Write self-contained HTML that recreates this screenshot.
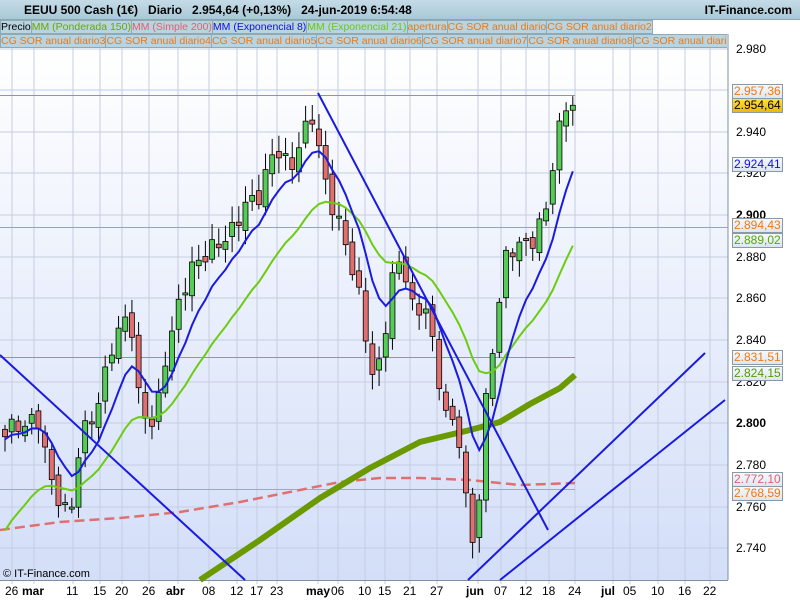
<!DOCTYPE html>
<html><head><meta charset="utf-8"><style>
*{margin:0;padding:0;box-sizing:border-box}
body{width:800px;height:600px;overflow:hidden;font-family:"Liberation Sans",sans-serif;background:#fff;position:relative}
#hdr{position:absolute;left:0;top:0;width:800px;height:20px;background:linear-gradient(#c4dce6,#a9c9d8);border-bottom:1px solid #8aa;font-weight:bold;font-size:12px;line-height:20px}
.leg{position:absolute;height:14px;font-size:10.5px;line-height:13px;white-space:nowrap;overflow:hidden}
.leg span{display:inline-block;background:#b9d3df;border:1px solid #8fa9b5;padding:0;margin-right:-1px;height:14px}
.lb{position:absolute;left:732px;font-size:12px;height:15px;line-height:13px;border:1px solid #8899aa;background:linear-gradient(#f6f9fc,#dde6f0);padding:0 1px}
.ax{position:absolute;left:736px;font-size:12px;color:#000}
.dx{position:absolute;top:584px;font-size:12px}
</style></head><body>
<svg width="800" height="600" style="position:absolute;left:0;top:0">
<defs><linearGradient id="bg" x1="0" y1="0" x2="0" y2="1"><stop offset="0" stop-color="#ffffff"/><stop offset="1" stop-color="#d3def8"/></linearGradient></defs>
<rect x="0" y="48" width="728" height="532" fill="url(#bg)"/>
<g id="grid" stroke="#c5cde0" stroke-width="1"></g>
<line x1="728" y1="34" x2="728" y2="580" stroke="#7f8fa0"/>
<line x1="0" y1="580.5" x2="728" y2="580.5" stroke="#7f8fa0"/>
<line x1="0" y1="227.5" x2="728" y2="227.5" stroke="#9aa4b4"/>
<line x1="0" y1="95.5" x2="575" y2="95.5" stroke="#f08010"/>
<line x1="0" y1="357.5" x2="575" y2="357.5" stroke="#f08010"/>
<line x1="0" y1="489.5" x2="575" y2="489.5" stroke="#a0a8c0"/>
<polyline fill="none" stroke="#e07070" stroke-width="2.5" stroke-dasharray="10,5" points="0,530 60,522 120,518 180,512 240,502 300,490 340,482 380,478 420,478 470,480 520,485 575,483"/>
<polyline fill="none" stroke="#6a9a00" stroke-width="6" points="200,580 260,540 320,498 370,468 420,442 470,430 500,422 530,404 560,388 575,375"/>
<g id="cd"></g>
<polyline id="e21" fill="none" stroke="#6ccc10" stroke-width="2"/>
<polyline id="e8" fill="none" stroke="#1a1ae0" stroke-width="2"/>
<g stroke="#1a1ae0" stroke-width="2">
<line x1="0" y1="355" x2="245" y2="580"/>
<line x1="318" y1="93" x2="548" y2="530"/>
<line x1="468" y1="580" x2="705" y2="353"/>
<line x1="500" y1="580" x2="725" y2="400"/>
</g>
<g fill="none" stroke="#000"><rect x="5" y="10" width="5" height="6" fill="#e07070"/><line x1="7.5" y1="7" x2="7.5" y2="19"/><rect x="12" y="5" width="5" height="9" fill="#50cc50"/><line x1="14.5" y1="2" x2="14.5" y2="17"/></g>
</svg>
<div id="hdr"><span style="position:absolute;left:24px">EEUU 500 Cash (1€)&nbsp;&nbsp;&nbsp;Diario&nbsp;&nbsp;&nbsp;2.954,64 (+0,13%)&nbsp;&nbsp;&nbsp;24-jun-2019 6:54:48</span><span style="position:absolute;right:8px">IT-Finance.com</span></div>
<div class="leg" style="left:0;top:20px;width:690px"><span style="color:#000">Precio</span><span style="color:#66aa00">MM (Ponderada 150)</span><span style="color:#e06070">MM (Simple 200)</span><span style="color:#1010e0">MM (Exponencial 8)</span><span style="color:#66cc10">MM (Exponencial 21)</span><span style="color:#f07810">apertura</span><span style="color:#f07810">CG SOR anual diario</span><span style="color:#f07810">CG SOR anual diario2</span></div>
<div class="leg" style="left:0;top:34px;width:727px"><span style="color:#f07810">CG SOR anual diario3</span><span style="color:#f07810">CG SOR anual diario4</span><span style="color:#f07810">CG SOR anual diario5</span><span style="color:#f07810">CG SOR anual diario6</span><span style="color:#f07810">CG SOR anual diario7</span><span style="color:#f07810">CG SOR anual diario8</span><span style="color:#f07810">CG SOR anual diario9</span></div>
<div class="ax" style="top:42px">2.980</div>
<div class="ax" style="top:125px">2.940</div>
<div class="ax" style="top:166px">2.920</div>
<div class="ax" style="top:208px;font-weight:bold">2.900</div>
<div class="ax" style="top:250px">2.880</div>
<div class="ax" style="top:291px">2.860</div>
<div class="ax" style="top:333px">2.840</div>
<div class="ax" style="top:375px">2.820</div>
<div class="ax" style="top:416px;font-weight:bold">2.800</div>
<div class="ax" style="top:458px">2.780</div>
<div class="ax" style="top:500px">2.760</div>
<div class="ax" style="top:541px">2.740</div>
<div class="lb" style="top:84px;color:#f07810">2.957,36</div>
<div class="lb" style="top:98px;color:#000;background:linear-gradient(#ffe040,#f0b800)">2.954,64</div>
<div class="lb" style="top:157px;color:#1010e0">2.924,41</div>
<div class="lb" style="top:218px;color:#f07810">2.894,43</div>
<div class="lb" style="top:233px;color:#55aa00">2.889,02</div>
<div class="lb" style="top:350px;color:#f07810">2.831,51</div>
<div class="lb" style="top:366px;color:#559900">2.824,15</div>
<div class="lb" style="top:472px;color:#e06070">2.772,10</div>
<div class="lb" style="top:486px;color:#f07810">2.768,59</div>
<div style="position:absolute;left:3px;top:568px;font-size:11px">© IT-Finance.com</div>
<div id="dates"></div>
<script>
var ds=[[5,"26"],[22,"mar",1],[66,"11"],[93,"15"],[115,"20"],[142,"26"],[166,"abr",1],[202,"08"],[230,"12"],[250,"17"],[270,"23"],[306,"may",1],[331,"06"],[358,"10"],[378,"15"],[403,"21"],[430,"27"],[466,"jun",1],[494,"07"],[519,"12"],[542,"18"],[568,"24"],[601,"jul",1],[623,"05"],[651,"10"],[678,"16"],[703,"22"]];
var h="",g="";
ds.forEach(function(d){h+='<div class="dx" style="left:'+d[0]+'px;'+(d[2]?'font-weight:bold;':'')+'">'+d[1]+'</div>';
var x=d[0]+(d[2]?12:7);g+='<line x1="'+x+'" y1="48" x2="'+x+'" y2="584"/>';});
document.getElementById('dates').innerHTML=h;
[49,90,132,173,215,257,298,340,382,423,465,507,548].forEach(function(y){g+='<line x1="0" y1="'+y+'" x2="728" y2="'+y+'"/>';});
document.getElementById('grid').innerHTML=g;
var A=[[5,430],[40,420],[50,480],[70,520],[80,440],[100,400],[110,350],[130,310],[140,410],[155,425],[165,360],[180,300],[190,270],[210,250],[230,235],[245,205],[260,195],[275,145],[290,170],[305,130],[315,110],[320,160],[330,200],[345,240],[360,300],[375,390],[385,330],[395,260],[405,270],[415,320],[425,300],[435,360],[445,410],[460,440],[468,520],[475,555],[485,410],[495,330],[505,260],[515,245],[530,245],[545,215],[555,150],[565,105],[575,104]];
function f(x){for(var i=1;i<A.length;i++)if(x<=A[i][0]){var a=A[i-1],b=A[i];return a[1]+(b[1]-a[1])*(x-a[0])/(b[0]-a[0]);}return 104;}
var c="",prev=f(5),e8=[],e21=[],v8=440,v21=540,n=0;
for(var x=5;x<=576;x+=6.68){n++;var cl=f(x)+Math.sin(n*2.3)*9,op=prev+Math.cos(n*1.7)*5;var hi=Math.min(op,cl)-4-Math.abs(Math.sin(n*3.1))*12,lo=Math.max(op,cl)+4+Math.abs(Math.cos(n*2.7))*12;
var up=cl<op,ty=Math.min(op,cl),ht=Math.max(2,Math.abs(op-cl));
c+='<line x1="'+x+'" y1="'+hi+'" x2="'+x+'" y2="'+lo+'" stroke="#000"/><rect x="'+(x-2.5)+'" y="'+ty+'" width="5" height="'+ht+'" fill="'+(up?'#55cc55':'#e07070')+'" stroke="#000" stroke-width="0.8"/>';
prev=cl;v8+=(cl-v8)*2/9;v21+=(cl-v21)*2/22;e8.push(x+','+v8.toFixed(1));e21.push(x+','+v21.toFixed(1));}
document.getElementById('cd').innerHTML=c;
document.getElementById('e8').setAttribute('points',e8.join(' '));
document.getElementById('e21').setAttribute('points',e21.join(' '));
</script>
</body></html>
